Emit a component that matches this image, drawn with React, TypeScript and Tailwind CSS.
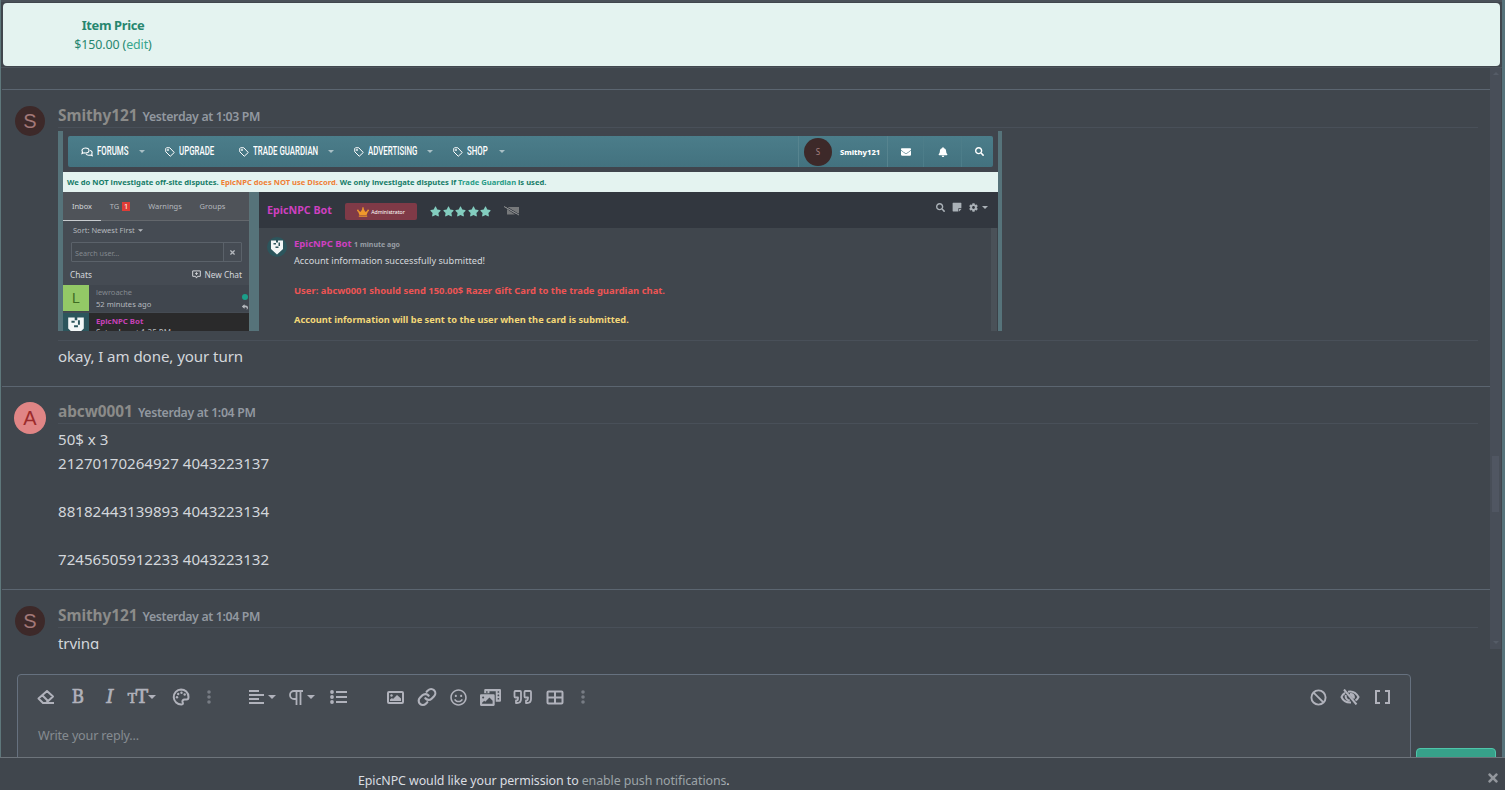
import React from 'react';
import {
  FaBell,
  FaCog,
  FaCrown,
  FaEnvelope,
  FaPhotoVideo,
  FaRegSmile,
  FaReply,
  FaSearch,
  FaStar,
  FaStickyNote,
  FaTimes,
} from 'react-icons/fa';

function Caret({ className = '' }: { className?: string }) {
  return (
    <svg viewBox="0 0 8 4" className={`shrink-0 ${className}`} fill="currentColor">
      <path d="M0 0h8L4 4z" />
    </svg>
  );
}

function TagIcon() {
  return (
    <svg viewBox="0 0 20 20" className="h-[10px] w-[10px]" fill="none" stroke="currentColor" strokeWidth="2">
      <path d="M1.5 3v6.5L10.5 18.5 18.5 11 9.5 1.5H3z" strokeLinejoin="round" />
      <circle cx="6" cy="6" r="1.2" />
    </svg>
  );
}

function CommentsIcon() {
  return (
    <svg viewBox="0 0 24 20" className="h-[10px] w-[12px]" fill="none" stroke="currentColor" strokeWidth="2.2">
      <path d="M9 2c4 0 7 2.200 7 5s-3 5-7 5c-1 0-2 0-3-.5L2 13l1-3C1 7 2 2 9 2z" />
      <path d="M18 7c4 .5 5 4 3.500 7l1 3.500-4-1.500c-3 1-7 0-8.500-2.500" />
    </svg>
  );
}

// EpicNPC shield
function Shield({ className }: { className: string }) {
  return (
    <svg viewBox="0 0 20 20" className={className}>
      <rect width="20" height="20" fill="#2c555c" />
      <path d="M4 3.500h5v2h2v-2h5v8.500l-6 5.500L4 12z" fill="#f2f6f6" />
      <path d="M6.500 6h2.500v1.500H6.500zM11.500 5.500h1.500V9h-1.500zM8.500 9.500h3V11h-3z" fill="#2c555c" />
    </svg>
  );
}

function NavItem({ label, width, caret, comments }: { label: string; width: string; caret?: boolean; comments?: boolean }) {
  return (
    <div className="flex items-center text-white">
      {comments ? <CommentsIcon /> : <TagIcon />}
      <span className={`ml-1 block whitespace-nowrap pb-[3px] ${width}`}>
        <span className="inline-block origin-left scale-x-[0.66] font-[Roboto] text-[11.900px] font-medium">{label}</span>
      </span>
      {caret && <Caret className="ml-[11px] h-[3px] w-[6px] text-[#a9c0c6]" />}
    </div>
  );
}

function ShotNav() {
  return (
    <div className="mx-[5px] mt-[5px] flex h-[31px] items-center rounded-[2px] bg-linear-to-b from-[#4b7d8a] to-[#43727f] pl-[13px]">
      <NavItem label="FORUMS" width="w-[31px]" caret comments />
      <div className="w-[20px]" />
      <NavItem label="UPGRADE" width="w-[35px]" />
      <div className="w-[25px]" />
      <NavItem label="TRADE GUARDIAN" width="w-[64px]" caret />
      <div className="w-[20px]" />
      <NavItem label="ADVERTISING" width="w-[48px]" caret />
      <div className="w-[20px]" />
      <NavItem label="SHOP" width="w-[21px]" caret />
      <div className="ml-auto flex h-full items-center border-l border-[#57848f] pl-[5px] text-white">
        <div className="flex size-[28px] items-center justify-center rounded-full bg-[#3d2929] text-[8px] text-[#a58080]">S</div>
        <span className="w-[55px] pl-[8px] text-[7.600px] font-extrabold">Smithy121</span>
        <span className="flex h-full w-[36px] items-center justify-center border-l border-[#57848f]"><FaEnvelope size={10} /></span>
        <span className="flex h-full w-[38px] items-center justify-center border-l border-[#4d7d89]"><FaBell size={10} /></span>
        <span className="flex h-full w-[32px] items-center justify-center border-l border-[#4d7d89] pl-1"><FaSearch size={9} /></span>
      </div>
    </div>
  );
}

function ShotSidebar() {
  return (
    <div className="w-[187px] overflow-hidden border-r border-[#5b7378] bg-[#454b53] text-[7.500px] text-[#b5b9be]">
      <div className="flex h-[29px] items-center border-b border-[#63676c] bg-[#4f5359]">
        <span className="flex h-[29px] w-[38px] items-center justify-center border-b border-[#c8ccd0] text-[#d3d6da]">Inbox</span>
        <span className="flex w-[38px] items-center justify-center gap-[3px]">
          TG<b className="flex h-[9px] w-[8px] items-center justify-center bg-[#e03c36] font-normal text-white">1</b>
        </span>
        <span className="w-[52px] text-center">Warnings</span>
        <span className="w-[43px] text-center">Groups</span>
      </div>
      <div className="flex h-[18px] items-center gap-[3px] pl-[10px]">
        Sort: Newest First <Caret className="h-[3px] w-[5px]" />
      </div>
      <div className="ml-[8px] mt-[3px] flex h-[20px] w-[171px] items-center rounded-[1px] border border-[#5b626a] bg-[#434950]">
        <span className="flex-1 pl-[3px] pt-px text-[7.200px] text-[#82888e]">Search user...</span>
        <span className="flex h-full w-[18px] items-center justify-center border-l border-[#5b626a] bg-[#464c54]">
          <FaTimes size={7} />
        </span>
      </div>
      <div className="flex h-[23px] items-center justify-between pl-[7px] pr-[7px] pt-[2px] text-[8.300px] text-[#d3d6da]">
        <span>Chats</span>
        <span className="flex items-center gap-[3px]">
          <svg viewBox="0 0 20 20" className="size-[9px]" fill="none" stroke="currentColor" strokeWidth="2.2">
            <path d="M1.500 2h17v12H12l-2 4-2-4H1.500zM10 5v6M7 8h6" />
          </svg>
          New Chat
        </span>
      </div>
      <div className="flex h-[27px] bg-[#40464e]">
        <span className="flex size-[26px] items-center justify-center bg-[#93c866] font-['Liberation_Sans'] text-[14px] text-[#3e6b22]">L</span>
        <span className="ml-[7px] flex-1 pt-px leading-[12px]">
          <span className="block text-[#858a90]">lewroache</span>
          <span className="block text-[7.600px]">52 minutes ago</span>
        </span>
        <span className="flex w-[9px] flex-col items-center pt-[9px]">
          <i className="block size-[6px] rounded-full bg-[#1b9f8a]" />
          <FaReply size={6} className="mt-[4px]" />
        </span>
      </div>
      <div className="mt-px flex h-[27px] bg-[#2a2a2b]">
        <Shield className="size-[26px]" />
        <span className="ml-[7px] pt-[2px] leading-[12px]">
          <b className="block text-[7.800px] text-[#c741b8]">EpicNPC Bot</b>
          <span className="block text-[8px]">Saturday at 1:35 PM</span>
        </span>
      </div>
    </div>
  );
}

function ShotChat() {
  return (
    <div className="min-w-0 flex-1 bg-[#40464d]">
      <div className="flex h-[36px] items-start bg-[#32373f] pl-[8px] pr-[10px] pt-[10px]">
        <b className="w-[78px] text-[10.700px] leading-[16px] text-[#ce40c0]">EpicNPC Bot</b>
        <span className="mt-[1px] flex h-[17px] w-[72px] items-center justify-center gap-[2px] rounded-[2px] bg-[#7f3a47] text-[5.200px] text-white">
          <FaCrown size={12} className="text-[#f0982b]" />
          Administrator
        </span>
        <span className="ml-[13px] mt-[4px] flex gap-[1.500px] text-[#83cdbf]">
          {[1, 2, 3, 4, 5].map((n) => (
            <FaStar key={n} size={11} />
          ))}
        </span>
        <svg viewBox="0 0 16 10" className="ml-[13px] mt-[4px] h-[10px] w-[16px]">
          <path d="M1 1h14v6.500h-4z" fill="#77797b" />
          <path d="M3 3v5.500h8z" fill="#77797b" />
          <path d="M1 0l15 9" stroke="#32373f" />
          <path d="M0 .5l15 8.500" stroke="#8f9193" />
        </svg>
        <span className="ml-auto flex items-center gap-[7px] text-[#aab1b7]">
          <FaSearch size={9} />
          <FaStickyNote size={10} />
          <FaCog size={9} />
          <Caret className="-ml-[3px] h-[3px] w-[6px]" />
        </span>
      </div>
      <div className="flex h-[103px]">
        <div className="ml-[8px] mt-[9px] flex size-[20px] shrink-0 overflow-hidden rounded-full">
          <Shield className="size-[20px]" />
        </div>
        <div className="ml-[7px] flex-1 whitespace-nowrap pt-[8px] text-[9.430px] leading-[15px] text-[#d5d8dc]">
          <div className="h-[17px] leading-[16px]">
            <b className="text-[9.500px] text-[#ce40c0]">EpicNPC Bot</b>{' '}
            <b className="text-[7px] text-[#989ea5]">1 minute ago</b>
          </div>
          <div className="text-[9.200px]">Account information successfully submitted!</div>
          <b className="mt-[15px] block text-[#ee5454]">
            User: abcw0001 should send 150.00$ Razer Gift Card to the trade guardian chat.
          </b>
          <b className="mt-[14px] block text-[9.280px] text-[#f3d878]">
            Account information will be sent to the user when the card is submitted.
          </b>
        </div>
        <div className="w-[7px] border-r border-[#3b4148] bg-[#4a5158]" />
      </div>
    </div>
  );
}

function Attachment() {
  return (
    <div className="mt-[3px] h-[200px] w-[944px] overflow-hidden border-l-[5px] border-r-[4px] border-[#56737a] bg-[#40454d]">
      <ShotNav />
      <div className="mt-[5px] flex h-[20px] items-center bg-[#e4f3f0] pl-[4px] text-[7.610px] font-bold text-[#167c68]">
        <span>
          We do NOT investigate off-site disputes. <span className="text-[#f07f35]">EpicNPC does NOT use Discord.</span> We
          only investigate disputes if <span className="text-[#2a9d87]">Trade Guardian</span> is used.
        </span>
      </div>
      <div className="flex h-[139px]">
        <ShotSidebar />
        <div className="w-[9px] bg-[#56737a]" />
        <ShotChat />
      </div>
    </div>
  );
}

function Message({
  name,
  time,
  letter,
  avatar,
  headerHeight = 'h-[23px] leading-[21px]',
  children,
}: {
  name: string;
  time: string;
  letter: string;
  avatar: string;
  headerHeight?: string;
  children: React.ReactNode;
}) {
  return (
    <article className="ml-px flex border-t border-[#5b6570] pl-[12px] pr-[12px] pt-[15px]">
      <div
        className={`flex shrink-0 items-center justify-center rounded-full font-['Liberation_Sans'] text-[20px] ${avatar}`}
      >
        {letter}
      </div>
      <div className="ml-3 min-w-0 flex-1">
        <header className={`whitespace-nowrap border-b border-[#495059] ${headerHeight}`}>
          <b className="text-[15.400px] tracking-[-0.050px] text-[#8b8b89]">{name}</b>
          <span className="ml-[5px] text-[12.300px] font-semibold tracking-[-0.330px] text-[#9298a0]">{time}</span>
        </header>
        <div className="text-[15.100px] leading-6 text-[#d3d6db]">{children}</div>
      </div>
    </article>
  );
}

function Tool({ w = 'w-8', children }: { w?: string; children: React.ReactNode }) {
  return <span className={`flex h-6 shrink-0 items-center justify-center ${w}`}>{children}</span>;
}

function Dots() {
  return (
    <svg viewBox="0 0 4 14" className="h-[14px] w-[4px]" fill="#777c84">
      <circle cx="2" cy="2" r="1.800" />
      <circle cx="2" cy="7" r="1.800" />
      <circle cx="2" cy="12" r="1.800" />
    </svg>
  );
}

function Toolbar() {
  const line = { fill: 'none', stroke: 'currentColor', strokeWidth: 2 } as const;
  return (
    <div className="flex items-center pl-[12px] pr-[12px] pt-[10px] text-[#b0b2bb]">
      <Tool>
        <svg viewBox="0 0 18 16" className="h-[16px] w-[18px]" {...line} strokeLinejoin="round">
          <path d="M6 14L1.500 9.500 10 2l6 5.500L9 14zM5 6l6 6M5.500 14H17" />
        </svg>
      </Tool>
      <Tool>
        <span className="font-['DejaVu_Serif'] text-[18.500px] leading-none [-webkit-text-stroke:0.7px]">
          <span className="inline-block scale-x-[0.9]">B</span>
        </span>
      </Tool>
      <Tool>
        <span className="font-['DejaVu_Serif'] text-[18.500px] italic leading-none [-webkit-text-stroke:0.6px]">I</span>
      </Tool>
      <Tool>
        <span className="flex items-baseline font-['DejaVu_Serif'] leading-none [-webkit-text-stroke:0.7px]">
          <span className="text-[13.500px]">T</span>
          <span className="-ml-[1px] text-[18.500px]">T</span>
        </span>
        <Caret className="h-[4px] w-[8px]" />
      </Tool>
      <Tool w="ml-[7px] w-8">
        <svg viewBox="0 0 18 18" className="size-[18px]" {...line}>
          <path d="M9 1.500a7.500 7.500 0 1 0 .5 15c2 0 1.500-1.500 1-2.500s.5-2.500 2-2.500h2c1 0 2-1 2-2.500C16.500 4.500 13 1.500 9 1.500z" />
          <g fill="currentColor" stroke="none">
            <circle cx="5" cy="9.200" r="1.200" />
            <circle cx="6.200" cy="6" r="1.200" />
            <circle cx="9.500" cy="4.800" r="1.200" />
            <circle cx="12.700" cy="6.500" r="1.200" />
          </g>
        </svg>
      </Tool>
      <Tool w="w-6"><Dots /></Tool>
      <Tool w="ml-[25px] w-8">
        <svg viewBox="0 0 16 14" className="h-[14px] w-[16px]" {...line}>
          <path d="M0 1h10M0 5h15M0 9h10M0 13h15" />
        </svg>
        <Caret className="ml-[3px] h-[4px] w-[8px]" />
      </Tool>
      <Tool w="ml-2 w-8">
        <svg viewBox="0 0 14 15" className="h-[15px] w-[14px]" {...line} strokeWidth={1.800}>
          <path d="M14 1H5a4 4 0 0 0 0 8h2.500M7.500 1v14M11.500 1v14" />
        </svg>
        <Caret className="ml-[4px] h-[4px] w-[8px]" />
      </Tool>
      <Tool w="ml-[5px] w-8">
        <svg viewBox="0 0 18 14" className="h-[14px] w-[18px]" {...line}>
          <path d="M6 2h11M6 7h11M6 12h11" />
          <g fill="currentColor" stroke="none">
            <circle cx="2" cy="2" r="1.900" />
            <circle cx="2" cy="7" r="1.900" />
            <circle cx="2" cy="12" r="1.900" />
          </g>
        </svg>
      </Tool>
      <Tool w="ml-6 w-8">
        <svg viewBox="0 0 17 13" className="h-[13px] w-[17px]" {...line}>
          <rect x="1" y="1" width="15" height="11" rx="1" />
          <path d="M3 10V8.500L5 7l1 1 4-4 4 3.500V10z" fill="currentColor" stroke="none" />
          <circle cx="4.500" cy="4.500" r="1.200" fill="currentColor" stroke="none" />
        </svg>
      </Tool>
      <Tool>
        <svg viewBox="0 0 24 24" className="mr-px size-[20px]" {...line} strokeWidth={2.600} strokeLinecap="round">
          <path d="M10 13.500a5 5 0 0 0 7.500.5l3-3a5 5 0 0 0-7.100-7.100L11.500 5.700" />
          <path d="M14 10.500a5 5 0 0 0-7.500-.5l-3 3a5 5 0 0 0 7.100 7.100l1.800-1.800" />
        </svg>
      </Tool>
      <Tool><FaRegSmile size={17} className="mr-px" /></Tool>
      <Tool><FaPhotoVideo size={21} className="mr-px" /></Tool>
      <Tool>
        <svg viewBox="0 0 20 16" className="h-[16px] w-[20px]" {...line} strokeWidth={1.800} strokeLinejoin="round">
          <path d="M2 2h5a1 1 0 0 1 1 1v7c0 2.500-1.500 4-4 4H3v-2.500c2 0 2-1 2-3H2.500a1 1 0 0 1-1-1V3zM12 2h5a1 1 0 0 1 1 1v7c0 2.500-1.500 4-4 4h-1v-2.500c2 0 2-1 2-3h-2.500a1 1 0 0 1-1-1V3z" />
        </svg>
      </Tool>
      <Tool>
        <svg viewBox="0 0 18 15" className="h-[15px] w-[18px]" {...line}>
          <rect x="1.500" y="1.500" width="15" height="12" rx="1" />
          <path d="M9 2v12M1 7.500h16" />
        </svg>
      </Tool>
      <Tool w="w-6"><Dots /></Tool>
      <Tool w="ml-auto w-8">
        <svg viewBox="0 0 18 18" className="size-[17px]" {...line}>
          <circle cx="9" cy="9" r="7.500" />
          <path d="M3.800 3.800l10.400 10.400" />
        </svg>
      </Tool>
      <Tool>
        <svg viewBox="0 0 20 16" className="h-[16px] w-[20px]" {...line}>
          <path d="M5 3.800C3 5 1.800 7 1.500 8c1.300 3 4.500 5.500 8.500 5.500h1M8 2.700c5-1 8.700 2 10.500 5.300-.5 1.200-1.500 2.500-3 3.500" />
          <path d="M5.800 6c-.6 3 1 5.200 4 5.500M10 5c2.500-.5 4.500 1.500 3.700 4.500M4 .5L16.500 15.500" />
          <path d="M9 5.500l4.500 4.500V7L11 4.500z" fill="currentColor" stroke="none" />
        </svg>
      </Tool>
      <Tool>
        <svg viewBox="0 0 16 14" className="h-[14px] w-[16px]" {...line}>
          <path d="M6 1H2v12h4M11 1h4v12h-4" />
        </svg>
      </Tool>
    </div>
  );
}

function ScrollBar() {
  return (
    <div className="mr-px flex w-[11px] flex-col items-center bg-[#484e58]">
      <Caret className="mt-[4px] h-[3px] w-[6px] rotate-180 text-[#555c67]" />
      <div className="mt-[381px] mr-[1px] h-[56px] w-[7px] bg-[#505662]" />
      <Caret className="mb-[5px] mt-auto h-[3px] w-[6px] text-[#555c67]" />
    </div>
  );
}

export default function App() {
  return (
    <div className="flex h-[790px] w-[1505px] flex-col overflow-hidden bg-[#40464d] font-['Noto_Sans',sans-serif]">
      <div className="flex h-[757px] flex-col overflow-hidden border-l border-r-[3px] border-l-[#5e777b] border-r-[#56727a]">
        <div className="h-[3px] shrink-0 border-b border-[#40464d] bg-[#4a5159]" />
        <div className="ml-[2px] mr-[2px] flex h-[63px] shrink-0 rounded-[4px] bg-[#e4f3f0] pt-[13px] text-[#27866f]">
          <div className="w-[220px] text-center text-[12.400px] leading-[19px] tracking-[-0.100px]">
            <b className="block text-[12.900px] tracking-[-0.350px]">Item Price</b>
            <span>
              $150.00 (<span className="text-[#37a68c]">edit</span>)
            </span>
          </div>
        </div>
        <div className="mt-px h-px shrink-0 bg-[#4d545c]" />

        <div className="flex h-[581px] shrink-0 overflow-hidden">
          <div className="flex-1 overflow-hidden pt-[21px]">
            <div className="h-[297px]">
              <Message name="Smithy121" time="Yesterday at 1:03 PM" letter="S" avatar="m-px size-[30px] bg-[#3d2929] text-[#a37878]">
                <Attachment />
                <div className="mt-[9px] border-t border-[#495059] pt-[3px] tracking-[-0.080px]">okay, I am done, your turn</div>
              </Message>
            </div>
            <div className="h-[203px]">
              <Message
                name="abcw0001"
                time="Yesterday at 1:04 PM"
                letter="A"
                avatar="size-8 bg-[#e08585] text-[#9c2b2b]"
                headerHeight="h-[22px] leading-[19px]"
              >
                <div className="whitespace-pre-line pt-[3px]">
                  {'50$ x 3\n21270170264927 4043223137\n\n88182443139893 4043223134\n\n72456505912233 4043223132'}
                </div>
              </Message>
            </div>
            <Message name="Smithy121" time="Yesterday at 1:04 PM" letter="S" avatar="m-px size-[30px] bg-[#3d2929] text-[#a37878]">
              <div className="pt-[3px] tracking-[-0.100px]">trying</div>
            </Message>
          </div>
          <ScrollBar />
        </div>

        <div className="flex flex-1 pl-[16px] pt-[25px]">
          <div className="h-[100px] w-[1394px] rounded-[4px] border border-[#66717f] bg-[#454b52]">
            <Toolbar />
            <div className="pl-[20px] pt-[17px] text-[12.600px] leading-5 tracking-[-0.180px] text-[#858b91]">Write your reply...</div>
          </div>
          <div className="ml-[5px] mt-[74px] h-[36px] w-[80px] rounded-[4px] border border-[#4fc5aa] bg-[#37a18a]" />
        </div>
      </div>

      <footer className="flex h-[33px] shrink-0 border-t border-[#6d747b] pl-[358px] text-[#dadde1]">
        <p className="pt-[13px] text-[12.400px] leading-5 tracking-[-0.080px]">
          EpicNPC would like your permission to <span className="text-[#9ca4a8]">enable push notifications</span>.
        </p>
        <FaTimes size={14} className="ml-auto mr-[5px] mt-[13px] text-[#93979d]" />
      </footer>
    </div>
  );
}
